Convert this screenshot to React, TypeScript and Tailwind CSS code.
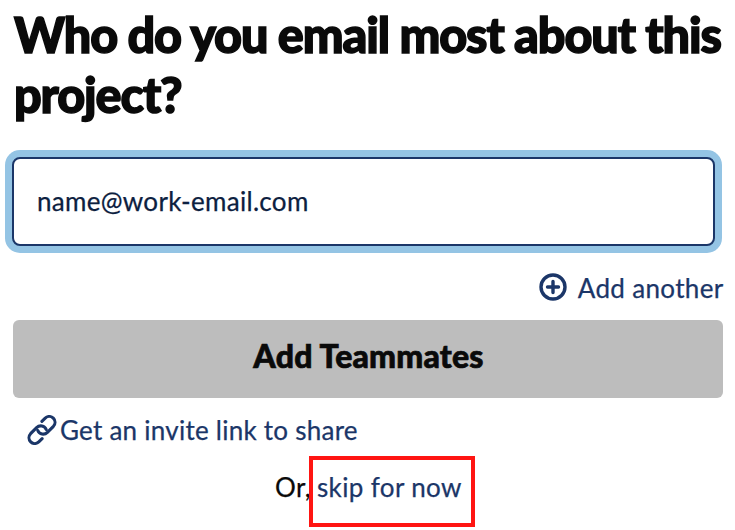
export default function App() {
  return (
    <main className="h-[530px] w-[735px] overflow-hidden bg-white pl-[13px] font-['Lato',sans-serif] text-[#1b3668]">
      <h1 className="h-[157px] w-[722px] pt-[4px] pl-px text-[48.5px] leading-[60px] font-black tracking-[-1.1px] whitespace-nowrap text-[#0a0a0a] [-webkit-text-stroke:1.5px_#0a0a0a]">Who do you email most about this<br />project?</h1>
      <div className="-ml-[1.5px] flex h-[89px] w-[703px] items-center rounded-[8px] border-2 border-[#1b3668] bg-white pl-[23.5px] text-[26px] tracking-[0.3px] text-[#0c2040] ring-[7px] ring-[#94c4e4] [-webkit-text-stroke:0.25px_#0c2040]">name@work-email.com</div>
      <div className="mt-[24px] flex h-[36px] w-[710.5px] items-center justify-end gap-[11px] text-[26px] tracking-[0.33px] [-webkit-text-stroke:0.25px_#1b3668]">
        <svg className="size-[28px] -translate-y-px" viewBox="0 0 28 28" fill="none" stroke="currentColor" strokeWidth="3.4"><circle cx="14" cy="14" r="12" /><path d="M14 8.5v11M8.5 14h11" strokeLinecap="round" /></svg>
        <span>Add another</span>
      </div>
      <button className="mt-[14px] block h-[78px] w-[710px] rounded-[6px] bg-[#bdbdbd] pb-[7px] pl-px text-[32px] font-black tracking-[0.2px] text-[#0a0a0a] [-webkit-text-stroke:0.7px_#0a0a0a]">Add Teammates</button>
      <div className="mt-[14px] flex h-[36px] items-center pl-[14px] text-[26px] tracking-[0.25px] [-webkit-text-stroke:0.25px_#1b3668]">
        <svg className="mr-[3px] h-[30px] w-[30px]" viewBox="0 0 30 30" fill="none" stroke="currentColor" strokeWidth="3.1" strokeLinecap="round">
          <path d="M10.8 15.5c1.6 4 6.6 4.8 9.6 1.8l6-6a5.8 5.8 0 0 0-8.2-8.2l-3.3 3.2" />
          <path d="M19.2 14.5c-1.6-4-6.6-4.8-9.6-1.8l-6 6a5.8 5.8 0 0 0 8.2 8.2l3.3-3.2" />
        </svg>
        <span>Get an invite link to share</span>
      </div>
      <div className="mt-[8px] flex pl-[262px] text-[26px] tracking-[0.36px]"><span className="w-[34px] pt-[12px] whitespace-nowrap text-[#0a0a0a] [-webkit-text-stroke:0.25px_#0a0a0a]">Or,</span><span className="h-[71px] w-[166px] border-4 border-[#ff1512] pt-[8px] pl-[4px] whitespace-nowrap [-webkit-text-stroke:0.25px_#1b3668]">skip for now</span></div>
    </main>
  );
}
